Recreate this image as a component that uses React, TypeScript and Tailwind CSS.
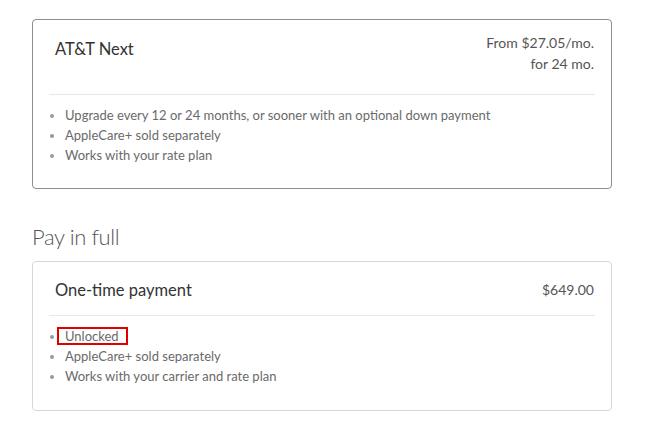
const items1 = [
  "Upgrade every 12 or 24 months, or sooner with an optional down payment",
  "AppleCare+ sold separately",
  "Works with your rate plan",
];

const items2 = ["Unlocked", "AppleCare+ sold separately", "Works with your carrier and rate plan"];

const font = { fontFamily: "Lato, 'Open Sans', sans-serif" };

export default function App() {
  return (
    <div className="bg-white w-[645px] h-[431px] px-8 pt-[19px]" style={font}>
      <div className="w-[580px] h-[170px] border border-[#8e8e8e] rounded-[4px] px-4 pt-[12px]">
        <div className="flex justify-between pl-[6px] pr-[1px] h-[62px]">
          <div className="mt-[7px] text-[16.5px] text-[#333] leading-[21px]">AT&amp;T Next</div>
          <div className="text-right text-[14px] text-[#555] leading-[21px]">
            <div>From $27.05/mo.</div>
            <div>for 24 mo.</div>
          </div>
        </div>
        <div className="border-t border-[#e8e8e8] pt-[10px]">
          <ul className="list-disc pl-4 text-[13px] leading-[20px] text-[#6a6a6a] marker:text-[#999]">
            {items1.map((t) => (
              <li key={t}>{t}</li>
            ))}
          </ul>
        </div>
      </div>

      <h2 className="mt-[33px] text-[22px] font-light tracking-[-0.4px] text-[#555] leading-[30px]">Pay in full</h2>

      <div className="mt-[9px] w-[580px] h-[150px] border border-[#d6d6d6] rounded-[4px] px-4 pt-[17px]">
        <div className="flex justify-between items-start pl-[6px] pr-[1px] h-[36px] leading-[22px]">
          <div className="text-[16.5px] text-[#333]">One-time payment</div>
          <div className="text-[14px] text-[#555]">$649.00</div>
        </div>
        <div className="border-t border-[#e8e8e8] pt-[10px]">
          <ul className="list-disc pl-4 text-[13px] leading-[20px] text-[#6a6a6a] marker:text-[#999]">
            {items2.map((t, i) => (
              <li key={t}>
                {i === 0 ? (
                  <span className="inline-block border-2 border-[#e00000] leading-[14px] pl-[6px] pr-[7px] -ml-[8px]">{t}</span>
                ) : (
                  t
                )}
              </li>
            ))}
          </ul>
        </div>
      </div>
    </div>
  );
}
